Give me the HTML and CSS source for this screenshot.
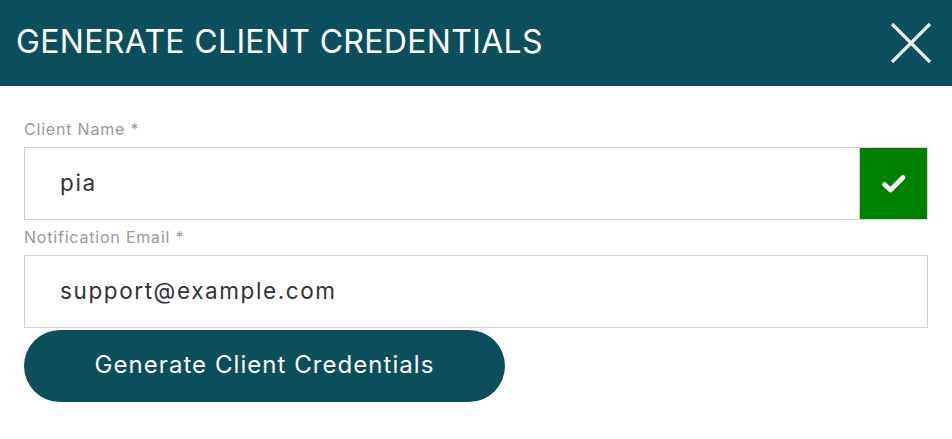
FILE: index.html
```html
<!DOCTYPE html>
<html>
<head>
<meta charset="utf-8">
<link rel="stylesheet" href="styles.css">
</head>
<body>
<div class="modal">
  <header class="modal-header">
    <h1 class="modal-title">GENERATE CLIENT CREDENTIALS</h1>
    <button class="close-btn" aria-label="Close">
      <svg width="44" height="44" viewBox="0 0 44 44"><path d="M3 3 L41 41 M41 3 L3 41" stroke="#e8eeee" stroke-width="3.2" fill="none"/></svg>
    </button>
  </header>
  <form class="modal-body">
    <label class="field-label">Client Name *</label>
    <div class="input-wrap">
      <div class="input-text">pia</div>
      <div class="valid-box">
        <svg width="24" height="20" viewBox="0 0 24 20"><path d="M2.5 10.5 L8.5 16 L21 3.5" stroke="#fff" stroke-width="4.6" fill="none" stroke-linecap="round" stroke-linejoin="round"/></svg>
      </div>
    </div>
    <label class="field-label">Notification Email *</label>
    <div class="input-wrap">
      <div class="input-text">support@example.com</div>
    </div>
    <button type="button" class="submit-btn">Generate Client Credentials</button>
  </form>
</div>
</body>
</html>
```

FILE: styles.css
```css
html, body {
  margin: 0;
  padding: 0;
  background: #fff;
  font-family: Inter, "Open Sans", sans-serif;
}
.modal {
  width: 952px;
}
.modal-header {
  height: 86px;
  background: #0b4f5d;
  display: flex;
  align-items: center;
  justify-content: space-between;
  padding: 0 19px 0 16px;
  box-sizing: border-box;
}
.modal-title {
  margin: 0;
  color: #fff;
  font-weight: 400;
  font-size: 32px;
  letter-spacing: 0.33px;
  padding-bottom: 4px;
}
.close-btn {
  background: none;
  border: 0;
  padding: 0;
  width: 44px;
  height: 44px;
  display: flex;
}
.modal-body {
  padding: 26px 24px 0 24px;
  display: flex;
  flex-direction: column;
}
.field-label {
  color: #9a9a9a;
  font-size: 16px;
  letter-spacing: 0.8px;
  line-height: 35px;
  height: 35px;
}
.input-wrap {
  display: flex;
  height: 73px;
  border: 1px solid #d3d3d3;
  box-sizing: border-box;
  width: 904px;
}
.input-text {
  flex: 1;
  display: flex;
  align-items: center;
  padding-left: 35px;
  font-size: 22.5px;
  letter-spacing: 1.6px;
  color: #333;
  padding-bottom: 3px;
}
.valid-box {
  width: 67px;
  background: #008000;
  border-left: 1px solid #d3d3d3;
  display: flex;
  align-items: center;
  justify-content: center;
}
.submit-btn {
  margin-top: 2px;
  width: 481px;
  height: 72px;
  border: 0;
  border-radius: 36px;
  background: #0b4f5d;
  color: #fff;
  font-family: Inter, "Open Sans", sans-serif;
  font-size: 24px;
  letter-spacing: 1.05px;
  padding: 0 0 3px 0;
}
```
